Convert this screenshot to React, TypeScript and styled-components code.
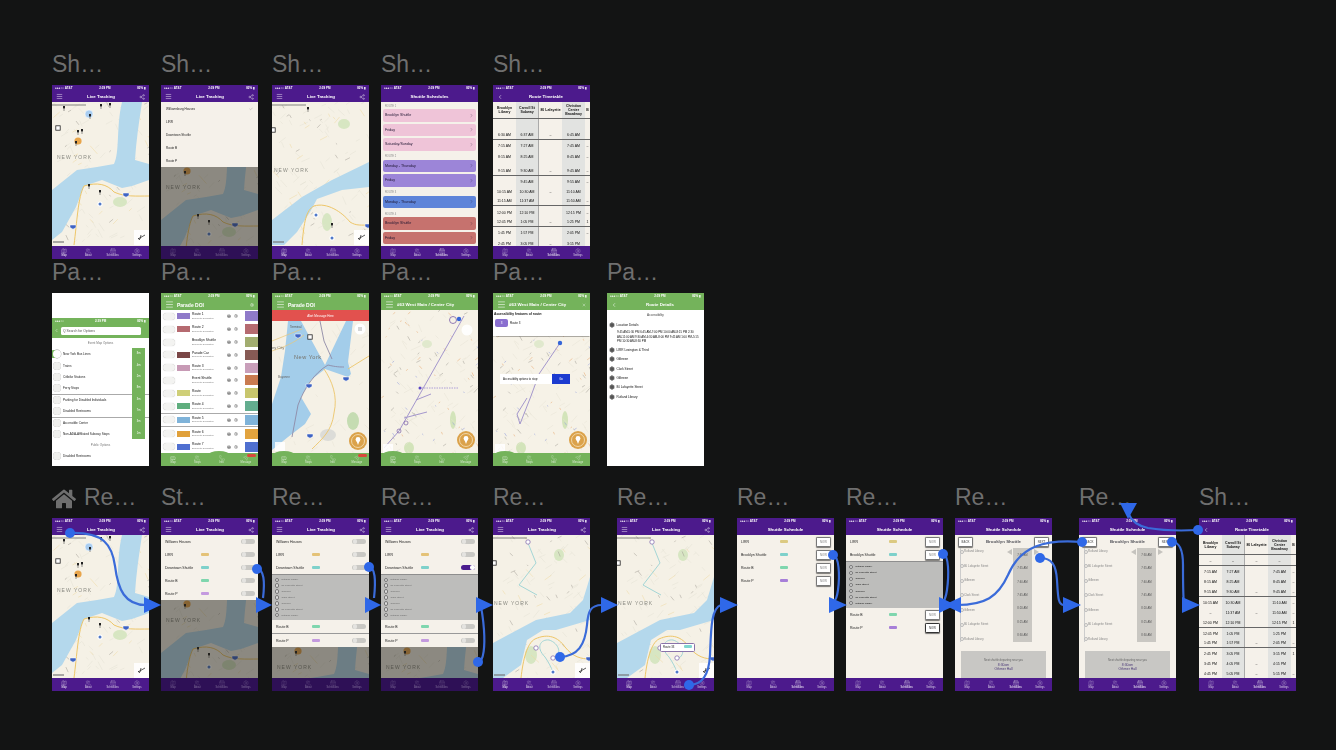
import React from "react";
import styled, { createGlobalStyle } from "styled-components";
import { Menu, Share2, Map as MapIcon, Users, CalendarDays, Settings, ChevronLeft, ChevronRight, Check, Bus, Phone, Send, X } from "lucide-react";
import { FaHome } from "react-icons/fa";

const PURPLE = "#4c1a8c";
const GREEN = "#74b35b";
const PAPER = "#f5f1ea";

const Global = createGlobalStyle`
  html, body { margin: 0; padding: 0; background: #131414; }
  body { font-family: "Liberation Sans", Arial, sans-serif; }
  #root { width: 1336px; height: 750px; overflow: hidden; }
`;

const Board = styled.div`
  position: relative;
  width: 1336px;
  height: 750px;
  padding: 50px 0 0 52px;
  box-sizing: border-box;
  background: #131414;
`;
const Row = styled.div<{ $top: number }>`
  display: flex;
  margin-top: ${(p) => p.$top}px;
`;
const Column = styled.div<{ $gap: number }>`
  width: 97px;
  margin-right: ${(p) => p.$gap}px;
  flex: none;
`;
const Label = styled.div`
  display: flex;
  align-items: baseline;
  gap: 8px;
  height: 35px;
  font-size: 23px;
  line-height: 29px;
  color: #6f6f6f;
  white-space: nowrap;
  svg { align-self: center; margin-top: -4px; flex: none; }
`;
const Frame = styled.div<{ $h: number; $bg?: string }>`
  width: 97px;
  height: ${(p) => p.$h}px;
  display: flex;
  flex-direction: column;
  overflow: hidden;
  background: ${(p) => p.$bg || PAPER};
  color: #1c1c1c;
  filter: blur(0.35px);
`;
const Bar = styled.div<{ $c: string }>`
  flex: none;
  background: ${(p) => p.$c};
  color: #fff;
`;
const Status = styled.div`
  height: 6px;
  display: flex;
  align-items: center;
  justify-content: space-between;
  padding: 0 3px;
  font-size: 3px;
  font-weight: bold;
`;
const Nav = styled.div`
  height: 11px;
  display: flex;
  align-items: center;
  padding: 0 4px;
  gap: 3px;
  font-size: 3.8px;
  svg { flex: none; }
`;
const Title = styled.div<{ $left?: boolean; $size?: number }>`
  flex: 1;
  text-align: ${(p) => (p.$left ? "left" : "center")};
  font-size: ${(p) => p.$size || 4.4}px;
  white-space: nowrap;
  font-weight: bold;
`;
const Content = styled.div`
  flex: 1;
  min-height: 0;
  display: flex;
  flex-direction: column;
  position: relative;
  overflow: hidden;
`;
const Tabs = styled.div<{ $c: string; $dim?: boolean }>`
  flex: none;
  height: 13px;
  display: grid;
  grid-template-columns: repeat(4, 1fr);
  background: ${(p) => p.$c};
  color: #fff;
  position: relative;
  & > * { opacity: ${(p) => (p.$dim ? 0.35 : 0.75)}; }
`;
const Tab = styled.div<{ $on?: boolean }>`
  display: flex;
  flex-direction: column;
  align-items: center;
  justify-content: center;
  gap: 0.5px;
  font-size: 2.6px;
  line-height: 3px;
  ${(p) => (p.$on ? "opacity: 1 !important;" : "")}
`;
const Bump = styled.i<{ $at: number }>`
  position: absolute;
  top: -2px;
  left: ${(p) => p.$at}px;
  width: 22px;
  height: 8px;
  border-radius: 50%;
  background: ${GREEN};
  opacity: 1 !important;
`;
const Badge = styled.i`
  position: absolute;
  top: 0.5px;
  right: 2px;
  width: 9px;
  height: 3px;
  border-radius: 2px;
  background: #d9483b;
  opacity: 1 !important;
`;

const MapBox = styled.div<{ $dim?: boolean }>`
  flex: 1;
  min-height: 0;
  overflow: hidden;
  position: relative;
  &::after {
    content: "";
    display: ${(p) => (p.$dim ? "block" : "none")};
    position: absolute;
    inset: 0;
    background: rgba(35, 33, 28, 0.5);
  }
`;
const MapSvg = styled.svg<{ $top?: number }>`
  display: block;
  width: 97px;
  margin-top: ${(p) => p.$top || 0}px;
`;

/* ---------- map art ---------- */
function rng(seed: number) {
  let s = seed;
  return () => {
    s = (s * 16807) % 2147483647;
    return s / 2147483647;
  };
}
function scribble(seed: number, n: number, h: number, len: number) {
  const r = rng(seed * 7919);
  let d = "";
  for (let i = 0; i < n; i++) {
    const x = r() * 97;
    const y = r() * h;
    const a = -0.9 + (r() > 0.5 ? 1.6 : 0) + r() * 0.5;
    const l = len * (0.4 + r());
    d += `M${x.toFixed(1)} ${y.toFixed(1)}l${(Math.cos(a) * l).toFixed(1)} ${(Math.sin(a) * l).toFixed(1)}`;
  }
  return d;
}

type Pin = [number, number, "k" | "b" | "h" | "o" | "s" | "q" | "r"];
const Mark = ({ p }: { p: Pin }) => {
  const [x, y, t] = p;
  if (t === "k")
    return (
      <g>
        <rect x={x - 1} y={y - 2} width={2} height={2.4} fill="#222" />
        <path d={`M${x} ${y}v3`} stroke="#333" strokeWidth={0.5} />
      </g>
    );
  if (t === "b")
    return (
      <g>
        <circle cx={x} cy={y} r={2.6} fill="#fff" />
        <circle cx={x} cy={y} r={1.5} fill="#4f78c8" />
      </g>
    );
  if (t === "h") return <circle cx={x} cy={y} r={4} fill="#a9cdf0" stroke="#fff" strokeWidth={0.5} />;
  if (t === "o") return <circle cx={x} cy={y} r={3.6} fill="#e8a54b" />;
  if (t === "s") return <path d={`M${x - 3} ${y - 2}h6v2.6l-3 1.6l-3-1.6z`} fill="#3e63c4" stroke="#fff" strokeWidth={0.5} />;
  if (t === "q") return <rect x={x - 2.2} y={y - 2.2} width={4.4} height={4.4} fill="#fff" stroke="#222" strokeWidth={0.8} />;
  return <circle cx={x} cy={y} r={2.2} fill="#fff" stroke="#7a5ea8" strokeWidth={0.7} />;
};

const Corner = () => (
  <g>
    <path d="M0 3h34" stroke="#555" strokeWidth={0.7} />
    <rect x={82} y={128} width={15} height={15} fill="#fff" opacity={0.85} />
    <path d="M86 137l7-4M88 137l1-4M86 136l2 2" stroke="#333" strokeWidth={0.8} fill="none" />
    <path d="M1 140h11" stroke="#777" strokeWidth={1.2} />
  </g>
);

const maps = {
  a: {
    seed: 11,
    water: "M70 0L90 0C87 20 84 40 83 58L97 62L97 78L80 84L70 86L50 78L32 84L24 105L10 130L0 138L0 88L25 68L45 65L62 62C68 50 64 25 70 0Z",
    road: "M22 143C25 120 26 95 32 84C45 80 55 82 62 90C72 95 85 94 97 94",
    parks: [[68, 100, 7, 5]],
    pins: [[12, 6, "k"], [37, 12, "h"], [49, 4, "k"], [58, 3, "k"], [38, 14, "k"], [26, 30, "k"], [30, 29, "k"], [26, 39, "o"], [24, 41, "k"], [37, 84, "k"], [48, 90, "k"], [48, 102, "b"], [74, 93, "s"], [21, 125, "s"], [6, 26, "q"]] as Pin[],
    text: [[5, 57, "NEW YORK"]],
  },
  b: {
    seed: 29,
    water: "M97 60L97 85L70 88L45 97L38 110L25 130L12 143L0 143L0 118L30 95L60 78Z",
    road: "M30 143C32 120 34 108 42 104C55 100 70 110 78 120C84 124 90 123 97 123",
    parks: [[72, 22, 6, 5], [55, 120, 5, 9]],
    pins: [[36, 7, "k"], [1, 28, "q"], [44, 113, "b"], [60, 123, "k"], [60, 136, "b"], [96, 124, "s"]] as Pin[],
    text: [[2, 70, "NEW YORK"]],
  },
  c: {
    seed: 47,
    water: "M97 42L90 65L77 78L43 85L0 108L0 143L10 143L28 130L34 105L50 95L63 95L97 85Z",
    road: "M28 143C30 125 34 108 42 104C55 98 65 102 72 112C80 122 88 124 97 124",
    parks: [[66, 20, 5, 6], [38, 120, 6, 9]],
    pins: [[35, 7, "r"], [1, 28, "q"], [43, 113, "r"], [60, 123, "r"], [60, 137, "b"], [96, 124, "s"]] as Pin[],
    route: "M35 8L43 28L26 50L44 60M60 124C70 120 66 108 56 105C48 104 42 112 52 122C56 128 58 132 60 137",
    text: [[1, 70, "NEW YORK"]],
  },
};

const MapArt = ({ v, top, h = 143 }: { v: keyof typeof maps; top?: number; h?: number }) => {
  const m = maps[v] as any;
  return (
    <MapSvg $top={top} height={h} viewBox={`0 0 97 ${h}`}>
      <rect width={97} height={h} fill="#f5f1e6" />
      {m.parks.map((g: number[], i: number) => (
        <ellipse key={i} cx={g[0]} cy={g[1]} rx={g[2]} ry={g[3]} fill="#d7e6c2" />
      ))}
      <path d={scribble(m.seed, 80, h, 7)} stroke="#e3dfd2" strokeWidth={0.45} fill="none" />
      <path d={scribble(m.seed + 3, 18, h, 8)} stroke="#efd9a0" strokeWidth={0.5} fill="none" />
      <path d={scribble(m.seed + 5, 24, h, 4)} stroke="#8a877e" strokeWidth={0.4} fill="none" />
      <path d={m.water} fill="#b4d8ec" />
      <path d={m.road} stroke="#eec668" strokeWidth={1} fill="none" />
      {m.route && <path d={m.route} stroke="#a4d6d6" strokeWidth={1} fill="none" />}
      {m.text.map((t: any, i: number) => (
        <text key={i} x={t[0]} y={t[1]} fontSize={5} letterSpacing={1} fill="#8b8b83" fontFamily="Liberation Sans">
          {t[2]}
        </text>
      ))}
      {m.pins.map((p: Pin, i: number) => (
        <Mark key={i} p={p} />
      ))}
      <Corner />
    </MapSvg>
  );
};

const PinButton = ({ x, y }: { x: number; y: number }) => (
  <g>
    <circle cx={x} cy={y} r={9} fill="#dba24a" />
    <circle cx={x} cy={y} r={6.5} fill="none" stroke="#f5e2bd" strokeWidth={0.8} />
    <circle cx={x} cy={y - 1.5} r={2.4} fill="#fff" />
    <path d={`M${x - 1.5} ${y}l1.5 4l1.5-4z`} fill="#fff" />
  </g>
);

const CityMap = () => (
  <MapSvg height={132} viewBox="0 0 97 132">
    <rect width={97} height={132} fill="#f5f1e6" />
    <ellipse cx={81} cy={100} rx={6} ry={9} fill="#c5dcb2" />
    <ellipse cx={56} cy={114} rx={8} ry={6} fill="#dcdcd8" />
    <path d={scribble(71, 50, 132, 7)} stroke="#e2ddd0" strokeWidth={0.4} fill="none" />
    <path
      d="M16 0L29 0L53 44L74 0L81 0L76 41L79 53L76 56L53 48L39 59L29 76L39 93L33 103L16 116L0 129L0 83L9 56L13 30Z"
      fill="#a3cdea"
    />
    <path d="M0 30C12 26 22 22 32 14M0 20L30 8" stroke="#e9c777" strokeWidth={0.7} fill="none" />
    <path d="M52 48C60 60 66 75 62 92C60 110 50 118 40 128M76 48L97 35" stroke="#ecc56a" strokeWidth={0.9} fill="none" />
    <path d="M20 116L26 84C32 68 42 52 56 44C64 46 68 46 72 46M48 0L52 20L60 38" stroke="#8f8aa6" strokeWidth={0.9} fill="none" />
    <text x={22} y={38} fontSize={5.6} letterSpacing={0.5} fill="#76736b" fontFamily="Liberation Sans">New York</text>
    <text x={0} y={28} fontSize={4} fill="#77746b" fontFamily="Liberation Sans">ey City</text>
    <text x={6} y={57} fontSize={3} fill="#666" fontFamily="Liberation Sans">Bayonne</text>
    <text x={18} y={7} fontSize={3} fill="#555" fontFamily="Liberation Sans">Terminal</text>
    <Mark p={[26, 15, "s"]} />
    <Mark p={[38, 16, "q"]} />
    <Mark p={[74, 58, "s"]} />
    <Mark p={[37, 65, "s"]} />
    <Mark p={[38, 115, "s"]} />
    <circle cx={88} cy={8} r={5.5} fill="#fff" />
    <path d="M86 7h4M86 9h4" stroke="#555" strokeWidth={0.5} />
    <rect x={3} y={121} width={10} height={9} fill="#fff" opacity={0.85} />
    <PinButton x={86} y={120} />
  </MapSvg>
);

const StreetMap = ({ h = 144, alt }: { h?: number; alt?: boolean }) => (
  <MapSvg height={h} viewBox={`0 0 97 ${h}`}>
    <rect width={97} height={h} fill="#f6f2e7" />
    <ellipse cx={28} cy={138} rx={5} ry={6} fill="#d3e4ba" />
    <ellipse cx={72} cy={110} rx={3} ry={9} fill="#d3e4ba" />
    <ellipse cx={46} cy={34} rx={5} ry={4} fill="#e0e9cd" />
    <path d={scribble(83, 90, h, 8)} stroke="#e7e2d4" strokeWidth={0.5} fill="none" />
    <path d={scribble(91, 34, h, 4)} stroke="#85847c" strokeWidth={0.4} fill="none" />
    <path d={scribble(101, 30, h, 3)} stroke="#eab07c" strokeWidth={0.6} fill="none" />
    <path d={scribble(131, 18, h, 3)} stroke="#9aa4dc" strokeWidth={0.6} fill="none" />
    {alt ? (
      <g>
        <path d="M67 33L46 64L38 86L27 114L24 104L34 88" stroke="#a497cd" strokeWidth={1} fill="none" />
        <circle cx={67} cy={33} r={2.2} fill="#3565d8" />
      </g>
    ) : (
      <g>
        <path d="M83 6L18 121L3 138M23 108L46 102M35 90L50 84" stroke="#a497cd" strokeWidth={1} fill="none" />
        <path d="M38 78H78" stroke="#9c88d6" strokeWidth={0.8} strokeDasharray="1.5 1" />
        <circle cx={39} cy={78} r={1.5} fill="#5a45c4" />
        <circle cx={72} cy={10} r={3.5} fill="none" stroke="#7a5ea8" strokeWidth={0.8} />
        <circle cx={78} cy={9} r={2.2} fill="#3565d8" />
        <circle cx={86} cy={20} r={5.5} fill="#fff" opacity={0.9} />
        <circle cx={25} cy={113} r={2} fill="none" stroke="#7a5ea8" strokeWidth={0.7} />
        <circle cx={18} cy={121} r={2} fill="none" stroke="#7a5ea8" strokeWidth={0.7} />
      </g>
    )}
    <rect x={2} y={134} width={10} height={10} fill="#fff" opacity={0.85} />
    <PinButton x={85} y={130} />
  </MapSvg>
);

/* ---------- shared chrome ---------- */
const Head = ({ c = PURPLE, title, left, right, size, back, plain }: any) => (
  <Bar $c={c}>
    <Status>
      <span>●●●○○ AT&amp;T</span>
      <span>2:39 PM</span>
      <span>82% ▮</span>
    </Status>
    <Nav>
      {back ? <ChevronLeft size={6} /> : plain ? null : <Menu size={left ? 9 : 7} strokeWidth={1.5} />}
      <Title $left={left} $size={size}>{title}</Title>
      {right}
    </Nav>
  </Bar>
);
const ShareBtn = <Share2 size={6} strokeWidth={1.2} />;

const PurpleTabs = ({ dim, active = 0, third = "Schedules" }: { dim?: boolean; active?: number; third?: string }) => {
  const items: [any, string][] = [[MapIcon, "Map"], [Users, "About"], [CalendarDays, third], [Settings, "Settings"]];
  return (
    <Tabs $c={dim ? "#2e1056" : PURPLE} $dim={dim}>
      {items.map(([I, t], i) => (
        <Tab key={i} $on={i === active && !dim}>
          <I size={6} strokeWidth={1} />
          <span>{t}</span>
        </Tab>
      ))}
    </Tabs>
  );
};
const GreenTabs = ({ bump, badge = true }: { bump: number; badge?: boolean }) => {
  const items: [any, string][] = [[Bus, "Map"], [Users, "Stops"], [Phone, "Info"], [Send, "Message"]];
  return (
    <Tabs $c={GREEN}>
      <Bump $at={bump} />
      {items.map(([I, t], i) => (
        <Tab key={i}>
          <I size={6} strokeWidth={1} />
          <span>{t}</span>
        </Tab>
      ))}
      {badge && <Badge />}
    </Tabs>
  );
};

/* ---------- live tracking ---------- */
const Popup = styled.div`
  position: absolute;
  left: 43px;
  top: 108px;
  width: 35px;
  height: 9px;
  box-sizing: border-box;
  background: #fff;
  border: 0.8px solid #8a73aa;
  border-radius: 1.5px;
  padding: 1px 2px;
  display: flex;
  justify-content: space-between;
  font-size: 2.8px;
`;
const Chip = styled.i<{ $c: string }>`
  display: block;
  width: 8px;
  height: 3.4px;
  border-radius: 1px;
  background: ${(p) => p.$c};
`;
const MapScreen = ({ v, h = 174, popup, tab = 0 }: { v: keyof typeof maps; h?: number; popup?: boolean; tab?: number }) => (
  <Frame $h={h}>
    <Head title="Live Tracking" right={ShareBtn} />
    <Content>
      <MapBox>
        <MapArt v={v} h={h - 30} />
      </MapBox>
      {popup && (
        <Popup>
          <span>Route 33</span>
          <Chip $c="#7fd6d0" />
        </Popup>
      )}
    </Content>
    <PurpleTabs active={tab} />
  </Frame>
);
const Panel = styled.div`
  flex: none;
  background: ${PAPER};
`;
const ListRow = styled.div<{ $line?: boolean }>`
  height: 13px;
  display: grid;
  grid-template-columns: 36px 10px 1fr;
  align-items: center;
  padding: 0 3px 0 4px;
  font-size: 3.5px;
  white-space: nowrap;
  ${(p) => (p.$line ? "border-top: 0.6px solid #999;" : "")}
  & > :last-child { justify-self: end; }
`;
const Toggle = styled.i<{ $on?: boolean }>`
  display: flex;
  align-items: center;
  justify-content: ${(p) => (p.$on ? "flex-end" : "flex-start")};
  width: 14px;
  height: 5.6px;
  padding: 0.5px;
  box-sizing: border-box;
  border-radius: 3px;
  background: ${(p) => (p.$on ? "#4b1d8e" : "#c9c8c4")};
  &::after {
    content: "";
    width: 4.6px;
    height: 4.6px;
    border-radius: 50%;
    background: ${(p) => (p.$on ? "#fff" : "#e4e3e0")};
  }
`;
const Drawer = styled.div<{ $h: number; $bright?: boolean }>`
  height: ${(p) => p.$h}px;
  background: #bdbdbb;
  border-top: 0.8px solid #8e8e8e;
  box-sizing: border-box;
  padding: 2.5px 3px;
  display: flex;
  flex-direction: column;
  justify-content: space-between;
  font-size: 2.5px;
  color: ${(p) => (p.$bright ? "#111" : "#6b6b6b")};
`;
const DrawerItem = styled.div`
  display: flex;
  align-items: center;
  gap: 2px;
  &::before {
    content: "";
    width: 2.4px;
    height: 2.4px;
    border-radius: 50%;
    border: 0.3px solid #777;
    background: #ddd;
  }
`;
const stops = ["Rutland Library", "80 Lafayette Street", "Gilbreen", "Clark Street", "Gilbreen", "80 Lafayette Street", "Rutland Library"];
const StopDrawer = ({ h = 46, bright }: { h?: number; bright?: boolean }) => (
  <Drawer $h={h} $bright={bright}>
    {stops.map((s, i) => (
      <DrawerItem key={i}>{s}</DrawerItem>
    ))}
  </Drawer>
);

const LiveList = ({ h = 174, open, on }: { h?: number; open?: boolean; on?: boolean }) => (
  <Frame $h={h}>
    <Head title="Live Tracking" right={ShareBtn} />
    <Content>
      <Panel>
        <ListRow>Williams Houses<span /><Toggle /></ListRow>
        <ListRow>LIRR<Chip $c="#e4c277" /><Toggle /></ListRow>
        <ListRow>Downtown Shuttle<Chip $c="#7ed1cb" /><Toggle $on={on} /></ListRow>
        {open && <StopDrawer />}
        <ListRow>Route B<Chip $c="#7fd6ae" /><Toggle /></ListRow>
        <ListRow $line={open}>Route P<Chip $c="#c49adf" /><Toggle /></ListRow>
      </Panel>
      <MapBox $dim>
        <MapArt v="a" top={-35} h={143} />
      </MapBox>
    </Content>
    <PurpleTabs dim />
  </Frame>
);
const PlainRow = styled.div`
  height: 13px;
  display: flex;
  align-items: center;
  justify-content: space-between;
  padding: 0 5px;
  font-size: 3.1px;
`;
const OptionList = ({ h = 174 }: { h?: number }) => (
  <Frame $h={h}>
    <Head title="Live Tracking" right={ShareBtn} />
    <Content>
      <Panel>
        {["Williamsburg Houses", "LIRR", "Downtown Shuttle", "Route B", "Route P"].map((t, i) => (
          <PlainRow key={t}>
            {t}
            {i === 0 && <Check size={4} strokeWidth={1} />}
          </PlainRow>
        ))}
      </Panel>
      <MapBox $dim>
        <MapArt v="a" top={-35} />
      </MapBox>
    </Content>
    <PurpleTabs dim />
  </Frame>
);

/* ---------- shuttle schedule list ---------- */
const Now = styled.span<{ $dark?: boolean }>`
  display: flex;
  align-items: center;
  justify-content: center;
  width: 13px;
  height: 8px;
  background: #fff;
  border: 0.7px solid ${(p) => (p.$dark ? "#333" : "#777")};
  border-radius: 1.2px;
  box-shadow: 0 0.6px 1px rgba(0, 0, 0, 0.5);
  font-size: 2.8px;
  color: ${(p) => (p.$dark ? "#222" : "#777")};
`;
const SchedRow = styled(ListRow)`
  grid-template-columns: 39px 10px 1fr;
`;
const SchedScreen = ({ open }: { open?: boolean }) => (
  <Frame $h={173}>
    <Head title="Shuttle Schedule" plain />
    <Content>
      <SchedRow>LIRR<Chip $c="#dcca82" /><Now>NOW</Now></SchedRow>
      <SchedRow>Brooklyn Shuttle<Chip $c="#7ed1cb" /><Now>NOW</Now></SchedRow>
      {open && <StopDrawer h={47} bright />}
      <SchedRow>Route B<Chip $c="#7fd6ae" /><Now>NOW</Now></SchedRow>
      <SchedRow>Route P<Chip $c="#a77fd8" /><Now $dark={open}>NOW</Now></SchedRow>
    </Content>
    <PurpleTabs active={2} />
  </Frame>
);

/* ---------- brooklyn shuttle ---------- */
const ShuttleTop = styled.div`
  height: 13px;
  display: flex;
  align-items: center;
  justify-content: space-between;
  padding: 0 3px;
  font-size: 4.4px;
  font-weight: bold;
  color: #55555c;
  flex: none;
`;
const TimeArea = styled.div`
  flex: none;
  height: 94px;
  display: grid;
  grid-template-columns: 1fr 19px 20px;
  padding: 0 0 0 5px;
`;
const Stops = styled.div`
  display: flex;
  flex-direction: column;
  justify-content: space-between;
  padding: 1px 0;
  font-size: 2.9px;
  color: #888;
  border-left: 0.6px solid #ccc;
  margin-right: 6px;
  position: relative;
`;
const Stop = styled.span`
  padding-left: 3px;
  white-space: nowrap;
  position: relative;
  &::before {
    content: "";
    position: absolute;
    left: -1.4px;
    top: 0.5px;
    width: 2px;
    height: 2px;
    border-radius: 50%;
    border: 0.3px solid #bbb;
    background: ${PAPER};
  }
`;
const Times = styled.div`
  background: #c9c7c2;
  display: flex;
  flex-direction: column;
  justify-content: space-around;
  align-items: center;
  font-size: 2.8px;
  color: #555;
  position: relative;
`;
const Arrow = styled.i<{ $dir: "l" | "r" }>`
  position: absolute;
  top: 1px;
  ${(p) => (p.$dir === "l" ? "left: -6.5px;" : "right: -6.5px;")}
  width: 0;
  height: 0;
  border-top: 3px solid transparent;
  border-bottom: 3px solid transparent;
  ${(p) => (p.$dir === "l" ? "border-right: 5px solid #c5c3be;" : "border-left: 5px solid #c5c3be;")}
`;
const NextBox = styled.div`
  margin: 9px 6px 0;
  height: 27px;
  flex: none;
  background: #c8c7c4;
  display: flex;
  flex-direction: column;
  align-items: center;
  justify-content: center;
  gap: 1px;
  font-size: 2.8px;
  color: #666;
  strong { font-size: 3.4px; font-weight: normal; color: #4c3a78; line-height: 4px; text-align: center; }
`;
const Brooklyn = ({ times }: { times: string[] }) => (
  <Frame $h={173}>
    <Head title="Shuttle Schedule" plain />
    <Content>
      <ShuttleTop>
        <Now>BACK</Now>
        Brooklyn Shuttle
        <Now>NEXT</Now>
      </ShuttleTop>
      <TimeArea>
        <Stops>
          {stops.map((s, i) => (
            <Stop key={i}>{s}</Stop>
          ))}
        </Stops>
        <Times>
          <Arrow $dir="l" />
          <Arrow $dir="r" />
          {times.map((t, i) => (
            <span key={i}>{t}</span>
          ))}
        </Times>
        <span />
      </TimeArea>
      <NextBox>
        Next shuttle departing near you
        <strong>8:30am<br />Othmer Hall</strong>
      </NextBox>
    </Content>
    <PurpleTabs active={2} />
  </Frame>
);
const times = ["7:30 AM", "7:35 AM", "7:40 AM", "7:45 AM", "8:20 AM", "8:25 AM", "8:30 AM"];

/* ---------- grouped schedule ---------- */
const Section = styled.div`
  font-size: 2.6px;
  color: #888;
  padding: 2.5px 4px 1.5px;
  line-height: 3px;
`;
const ColorBar = styled.div<{ $c: string }>`
  height: 13px;
  margin: 0 2px 1.6px;
  border-radius: 2px;
  background: ${(p) => p.$c};
  display: flex;
  align-items: center;
  justify-content: space-between;
  padding: 0 2px;
  font-size: 3.6px;
  color: #1d1530;
`;
const Grouped = () => {
  const groups: [string, string, string[]][] = [
    ["ROUTE 1", "#efc4d8", ["Brooklyn Shuttle", "Friday", "Saturday/Sunday"]],
    ["ROUTE 2", "#9c85d8", ["Monday - Thursday", "Friday"]],
    ["ROUTE 3", "#5e84d9", ["Monday - Thursday"]],
    ["ROUTE 4", "#c6726e", ["Brooklyn Shuttle", "Friday"]],
  ];
  return (
    <Frame $h={174}>
      <Head title="Shuttle Schedules" plain />
      <Content>
        {groups.map(([g, c, items]) => (
          <React.Fragment key={g}>
            <Section>{g}</Section>
            {items.map((t, i) => (
              <ColorBar key={i} $c={c}>
                {t}
                <ChevronRight size={5} strokeWidth={1.2} />
              </ColorBar>
            ))}
          </React.Fragment>
        ))}
      </Content>
      <PurpleTabs active={2} />
    </Frame>
  );
};

/* ---------- timetable ---------- */
const TableGrid = styled.div`
  flex: 1;
  overflow: hidden;
  background: ${PAPER};
`;
const TRow = styled.div<{ $h: number; $sep?: boolean }>`
  display: grid;
  grid-template-columns: 23px 23px 23px 23px 5px;
  height: ${(p) => p.$h}px;
  box-sizing: border-box;
  align-items: end;
  text-align: center;
  font-size: 3.5px;
  line-height: 4px;
  color: #111;
  border-bottom: ${(p) => (p.$sep ? "0.8px solid #666" : "0")};
`;
const TCell = styled.div<{ $gray?: boolean; $head?: boolean; $rule?: boolean }>`
  height: 100%;
  display: flex;
  align-items: ${(p) => (p.$head ? "center" : "flex-end")};
  justify-content: center;
  padding-bottom: ${(p) => (p.$head ? 0 : 2)}px;
  box-sizing: border-box;
  background: ${(p) => (p.$gray ? "#e2e3e1" : "transparent")};
  font-weight: ${(p) => (p.$head ? "bold" : "normal")};
  ${(p) => (p.$rule ? "border-right: 1px solid #aaa;" : "")}
`;
type TableRow = [number, boolean, string[]];
const TableScreen = ({ h, head, data, headH, nav }: { h: number; head: string[]; data: TableRow[]; headH: number; nav: string }) => (
  <Frame $h={h}>
    <Head title={nav} back />
    <Content>
      <TableGrid>
        <TRow $h={headH} $sep>
          {head.map((t, i) => (
            <TCell key={i} $head $gray={i === 1 || i === 3} $rule={i === 1}>{t}</TCell>
          ))}
        </TRow>
        {data.map(([rh, sep, cells], r) => (
          <TRow key={r} $h={rh} $sep={sep}>
            {cells.map((t, i) => (
              <TCell key={i} $gray={i === 1 || i === 3} $rule={i === 1}>{t}</TCell>
            ))}
          </TRow>
        ))}
      </TableGrid>
    </Content>
    <PurpleTabs active={2} />
  </Frame>
);
const tableHead = ["Brooklyn Library", "Carroll St Subway", "80 Lafayette", "Christian Center Broadway", "B"];
const table1: TableRow[] = [
  [21, true, ["6:30 AM", "6:37 AM", "–", "6:45 AM", ""]],
  [10.3, false, ["7:15 AM", "7:27 AM", "", "7:45 AM", "–"]],
  [10.3, false, ["8:15 AM", "8:25 AM", "", "8:45 AM", "–"]],
  [15, true, ["9:15 AM", "9:30 AM", "–", "9:45 AM", "–"]],
  [10.3, false, ["", "9:45 AM", "", "9:55 AM", "–"]],
  [10.3, false, ["10:15 AM", "10:30 AM", "–", "11:10 AM", ""]],
  [10.3, true, ["11:15 AM", "11:37 AM", "", "11:50 AM", "–"]],
  [10.3, false, ["12:00 PM", "12:10 PM", "", "12:15 PM", "–"]],
  [10.3, true, ["12:45 PM", "1:05 PM", "–", "1:25 PM", "1"]],
  [10.3, false, ["1:45 PM", "1:57 PM", "", "2:05 PM", "–"]],
  [10.3, false, ["2:45 PM", "3:05 PM", "–", "3:15 PM", ""]],
];
const table3: TableRow[] = [
  [11, true, ["–", "–", "–", "–", ""]],
  [10, false, ["7:15 AM", "7:27 AM", "", "7:45 AM", "–"]],
  [10, false, ["8:15 AM", "8:25 AM", "", "8:45 AM", "–"]],
  [11, true, ["9:15 AM", "9:30 AM", "–", "9:45 AM", "–"]],
  [10, false, ["10:15 AM", "10:30 AM", "", "11:10 AM", "–"]],
  [10, false, ["–", "11:37 AM", "–", "11:50 AM", "–"]],
  [11, true, ["12:00 PM", "12:10 PM", "", "12:15 PM", "1"]],
  [10, false, ["12:45 PM", "1:05 PM", "", "1:25 PM", ""]],
  [10, true, ["1:45 PM", "1:57 PM", "–", "2:05 PM", "–"]],
  [10, false, ["2:45 PM", "3:05 PM", "", "3:15 PM", "1"]],
  [10, false, ["3:45 PM", "4:05 PM", "–", "4:15 PM", ""]],
  [10, false, ["4:45 PM", "5:05 PM", "–", "5:15 PM", "–"]],
];

/* ---------- parade screens ---------- */
const SearchHead = styled.div`
  flex: none;
  margin-top: 25px;
  height: 20px;
  background: ${GREEN};
  color: #fff;
`;
const SearchRow = styled.div`
  display: flex;
  align-items: center;
  gap: 2px;
  padding: 0 8px 0 2px;
  height: 13px;
`;
const SearchField = styled.div`
  flex: 1;
  height: 8px;
  background: #fff;
  color: #555;
  border-radius: 1.5px;
  display: flex;
  align-items: center;
  padding: 0 2px;
  font-size: 3.4px;
  gap: 1px;
`;
const OptionWrap = styled.div`
  position: relative;
  flex: 1;
  background: #fff;
`;
const OptionHead = styled.div`
  height: 10.5px;
  line-height: 10.5px;
  text-align: center;
  font-size: 3px;
  color: #777;
`;
const OptionRow = styled.div<{ $line?: boolean }>`
  display: flex;
  align-items: center;
  gap: 2px;
  height: 11.4px;
  box-sizing: border-box;
  font-size: 3.1px;
  white-space: nowrap;
  ${(p) => (p.$line ? "border-top: 0.6px solid #aaa;" : "")}
`;
const SmallToggle = styled.i<{ $on?: boolean }>`
  flex: none;
  width: 8px;
  height: 8px;
  margin-left: 1px;
  border-radius: 50%;
  background: ${(p) => (p.$on ? "#fff" : "#f0f0ee")};
  box-shadow: ${(p) => (p.$on ? `-3px 0 0 ${GREEN}, 0 0 0 0.4px #999` : "0 0 0.6px #999")};
`;
const SideIndex = styled.div`
  position: absolute;
  right: 4px;
  top: 10px;
  width: 13px;
  height: 91px;
  background: ${GREEN};
  display: flex;
  flex-direction: column;
  justify-content: space-around;
  align-items: center;
  font-size: 2.6px;
  color: #fff;
`;
const SearchScreen = () => {
  const items = ["New York Bus Lines", "Trains", "Citibike Stations", "Ferry Stops", "Parking for Disabled Individuals", "Disabled Restrooms", "Accessible Center", "Non-ADA-Affiliated Subway Stops"];
  return (
    <Frame $h={173} $bg="#fff">
      <SearchHead>
        <Status>
          <span>●●●○○</span>
          <span>2:39 PM</span>
          <span>82% ▮</span>
        </Status>
        <SearchRow>
          <ChevronLeft size={5} />
          <SearchField>Q Search for Options</SearchField>
        </SearchRow>
      </SearchHead>
      <OptionWrap>
        <OptionHead>Event Map Options</OptionHead>
        {items.map((t, i) => (
          <OptionRow key={i} $line={i === 4 || i === 6}>
            <SmallToggle $on={i === 0} />
            {t}
          </OptionRow>
        ))}
        <OptionHead>Public Options</OptionHead>
        <OptionRow><SmallToggle />Disabled Restrooms</OptionRow>
        <SideIndex>
          {["8m", "4m", "2m", "8m", "3m", "7m", "3m", "1m"].map((t, i) => (
            <span key={i}>{t}</span>
          ))}
        </SideIndex>
      </OptionWrap>
    </Frame>
  );
};

const RouteRow = styled.div<{ $line?: boolean }>`
  flex: 1;
  min-height: 0;
  display: grid;
  grid-template-columns: 16px 14px 1fr 18px 13px;
  align-items: center;
  box-sizing: border-box;
  ${(p) => (p.$line ? "border-top: 0.6px solid #aaa;" : "")}
`;
const RouteToggle = styled.i`
  display: block;
  width: 12px;
  height: 7px;
  margin-left: 2px;
  border-radius: 4px;
  background: #f3f3f1;
  box-shadow: 0 0 0.8px #aaa;
`;
const RouteBox = styled.i<{ $c: string }>`
  display: block;
  width: 13px;
  height: 6px;
  background: ${(p) => p.$c};
`;
const RouteText = styled.div`
  padding-left: 1px;
  font-size: 3.3px;
  line-height: 3.6px;
  color: #111;
  white-space: nowrap;
  small { display: block; font-size: 2.2px; line-height: 2.6px; color: #777; }
`;
const RouteIcons = styled.div`
  display: flex;
  gap: 3px;
  color: #555;
`;
const RouteSwatch = styled.i<{ $c: string }>`
  display: block;
  height: 10px;
  background: ${(p) => p.$c};
`;
const routes: [string, string, string][] = [
  ["#8f7ac9", "Route 1", "#8f7ac9"],
  ["#b56a70", "Route 2", "#b56a70"],
  ["transparent", "Brooklyn Shuttle", "#a2ad70"],
  ["#7a4646", "Parade Car", "#875a55"],
  ["#c79ab5", "Route 3", "#c99fba"],
  ["transparent", "Event Shuttle", "#c97b50"],
  ["#cfcf78", "Route", "#c8c66d"],
  ["#5fae7e", "Route 4", "#63ad8f"],
  ["#7fb3d9", "Route 5", "#7fb3d9"],
  ["#e0a03a", "Route 6", "#e2a33e"],
  ["#4f6fd0", "Route 7", "#4f6fd0"],
];
const RouteList = () => (
  <Frame $h={173} $bg="#fff">
    <Head c={GREEN} title="Parade DOI" left size={5} right={<Settings size={4} />} />
    <Content>
      {routes.map(([c, t, s], i) => (
        <RouteRow key={i} $line={i === 8 || i === 9}>
          <RouteToggle />
          <RouteBox $c={c} />
          <RouteText>
            {t}
            <small>Bus Route Description</small>
          </RouteText>
          <RouteIcons>
            <Bus size={4} />
            <Settings size={4} />
          </RouteIcons>
          <RouteSwatch $c={s} />
        </RouteRow>
      ))}
    </Content>
    <GreenTabs bump={47} />
  </Frame>
);

const RedBar = styled.div`
  flex: none;
  height: 11px;
  background: #e2514e;
  color: #fff;
  font-size: 3px;
  display: flex;
  align-items: center;
  justify-content: center;
`;
const CityScreen = () => (
  <Frame $h={173}>
    <Head c={GREEN} title="Parade DOI" left size={5} />
    <RedBar>Alert Message Here</RedBar>
    <Content>
      <MapBox>
        <CityMap />
      </MapBox>
    </Content>
    <GreenTabs bump={1} />
  </Frame>
);
const StreetScreen = () => (
  <Frame $h={173}>
    <Head c={GREEN} title="#63 West Main / Center City" left size={4.4} />
    <Content>
      <MapBox>
        <StreetMap />
      </MapBox>
    </Content>
    <GreenTabs bump={1} badge={false} />
  </Frame>
);
const PopupPanel = styled.div`
  position: absolute;
  left: 0;
  right: 0;
  top: 0;
  height: 26px;
  background: #fff;
  box-shadow: 0 0.5px 1px rgba(0, 0, 0, 0.3);
  padding: 1.5px 1px;
  box-sizing: border-box;
  font-size: 3.3px;
  color: #111;
  font-weight: bold;
`;
const PopupLine = styled.div`
  display: flex;
  align-items: center;
  gap: 2px;
  margin-top: 3px;
  font-weight: normal;
  font-size: 3px;
`;
const PurplePill = styled.span`
  display: flex;
  align-items: center;
  justify-content: center;
  width: 13px;
  height: 8px;
  margin-left: 1px;
  border-radius: 2px;
  background: #8a6fd0;
  color: #fff;
`;
const Callout = styled.div`
  position: absolute;
  left: 7px;
  top: 64px;
  width: 70px;
  height: 10px;
  background: #fff;
  display: flex;
  align-items: center;
  justify-content: space-between;
  font-size: 2.8px;
  padding-left: 3px;
  box-sizing: border-box;
  color: #111;
`;
const GoBtn = styled.span`
  width: 18px;
  height: 10px;
  background: #1c3bd0;
  color: #fff;
  display: flex;
  align-items: center;
  justify-content: center;
  font-size: 2.8px;
`;
const RoutePopup = () => (
  <Frame $h={173}>
    <Head c={GREEN} title="#63 West Main / Center City" left size={4.4} right={<X size={4} />} />
    <Content>
      <MapBox>
        <StreetMap alt />
      </MapBox>
      <PopupPanel>
        Accessibility features of route:
        <PopupLine>
          <PurplePill>3</PurplePill>
          Route 3
        </PopupLine>
      </PopupPanel>
      <Callout>
        Accessibility options to stop:
        <GoBtn>Go</GoBtn>
      </Callout>
    </Content>
    <GreenTabs bump={1} badge={false} />
  </Frame>
);
const DetailBody = styled.div`
  flex: 1;
  background: #fff;
  padding: 2px;
`;
const DetailTitle = styled.div`
  text-align: center;
  font-size: 3.1px;
  color: #444;
  margin: 1px 0 3px;
`;
const DetailItem = styled.div`
  display: flex;
  align-items: center;
  gap: 1.5px;
  height: 9.4px;
  font-size: 3.1px;
  color: #111;
`;
const DetailText = styled.div`
  font-size: 2.9px;
  line-height: 4.4px;
  color: #111;
  padding: 1px 3px 1.5px 8px;
`;
const Detail = () => (
  <Frame $h={173} $bg="#fff">
    <Head c={GREEN} title="Route Details" back />
    <DetailBody>
      <DetailTitle>Accessibility</DetailTitle>
      <DetailItem><Settings size={6} fill="#555" color="#555" />Location Details</DetailItem>
      <DetailText>
        9:45 AM-5:30 PM 6:45 AM-7:00 PM 10:00 AM-8:15 PM 2:30 AM-11:00 AM 9:30 AM-6:30 AM-8:00 PM 9:45 AM 1:00 PM-5:15 PM 10:30 AM-8:30 PM
      </DetailText>
      {["LIRR Lexington & Third", "Gilbreen", "Clark Street", "Gilbreen", "80 Lafayette Street", "Rutland Library"].map((t, i) => (
        <DetailItem key={i}><Settings size={6} fill="#555" color="#555" />{t}</DetailItem>
      ))}
    </DetailBody>
  </Frame>
);

/* ---------- connectors ---------- */
const Wires = styled.svg`
  position: absolute;
  left: 0;
  top: 0;
  pointer-events: none;
`;
const BLUE = "#2f68e8";
const wires = [
  "M70 533C104 532 112 545 115 566C118 590 125 605 146 605",
  "M257 569C264 569 265 582 263 598",
  "M369 567C375 567 376 580 374 598",
  "M478 662C484 662 485 645 484 630C483 617 482 610 480 603",
  "M560 657C578 656 585 645 587 625C588 612 590 605 602 605",
  "M689 685C702 685 709 675 710 655C711 630 711 608 721 605",
  "M833 555C839 556 840 575 838 590C837 597 836 600 832 604",
  "M943 554C949 555 949 575 947 590C946 597 945 600 942 604",
  "M1082 542C1045 539 1020 546 1008 575C998 597 985 605 957 605",
  "M1040 558C1052 558 1056 565 1057 580C1058 597 1058 605 1064 605",
  "M1172 542C1180 542 1183 550 1183 565C1183 585 1183 597 1184 603",
  "M1198 530C1180 531 1160 530 1148 528C1138 526 1131 520 1128 513",
];
const dots = [[70, 533], [257, 569], [369, 567], [478, 662], [560, 657], [689, 685], [833, 555], [943, 554], [1082, 542], [1040, 558], [1172, 542], [1198, 530]];
const arrows = [
  "144,597 161,605 144,613", "256,597 272,605 256,613", "365,597 381,605 365,613", "476,597 493,605 476,613",
  "601,597 618,605 601,613", "720,597 738,605 720,613", "829,597 847,605 829,613", "939,597 956,605 939,613",
  "961,597 944,605 961,613", "1063,597 1081,605 1063,613", "1182,597 1200,605 1182,613", "1120,503 1137,503 1128,519",
];
const Connectors = () => (
  <Wires width={1336} height={750} viewBox="0 0 1336 750">
    {wires.map((d, i) => (
      <path key={i} d={d} stroke="#3a6bd9" strokeWidth={2.2} fill="none" />
    ))}
    {arrows.map((p, i) => (
      <polygon key={i} points={p} fill={BLUE} />
    ))}
    {dots.map(([x, y], i) => (
      <circle key={i} cx={x} cy={y} r={5} fill={BLUE} />
    ))}
  </Wires>
);

/* ---------- board ---------- */
type Cell = { label: string; home?: boolean; gap: number; node: React.ReactNode };
const row1: Cell[] = [
  { label: "Sh…", gap: 12, node: <MapScreen v="a" /> },
  { label: "Sh…", gap: 14, node: <OptionList /> },
  { label: "Sh…", gap: 12, node: <MapScreen v="b" /> },
  { label: "Sh…", gap: 15, node: <Grouped /> },
  { label: "Sh…", gap: 0, node: <TableScreen h={174} head={tableHead} headH={17} data={table1} nav="Route Timetable" /> },
];
const row2: Cell[] = [
  { label: "Pa…", gap: 12, node: <SearchScreen /> },
  { label: "Pa…", gap: 14, node: <RouteList /> },
  { label: "Pa…", gap: 12, node: <CityScreen /> },
  { label: "Pa…", gap: 15, node: <StreetScreen /> },
  { label: "Pa…", gap: 17, node: <RoutePopup /> },
  { label: "Pa…", gap: 0, node: <Detail /> },
];
const row3: Cell[] = [
  { label: "Re…", home: true, gap: 12, node: <MapScreen v="a" h={173} /> },
  { label: "St…", gap: 14, node: <LiveList h={173} /> },
  { label: "Re…", gap: 12, node: <LiveList h={173} open /> },
  { label: "Re…", gap: 15, node: <LiveList h={173} open on /> },
  { label: "Re…", gap: 27, node: <MapScreen v="c" h={173} /> },
  { label: "Re…", gap: 23, node: <MapScreen v="c" h={173} popup /> },
  { label: "Re…", gap: 12, node: <SchedScreen /> },
  { label: "Re…", gap: 12, node: <SchedScreen open /> },
  { label: "Re…", gap: 27, node: <Brooklyn times={times} /> },
  { label: "Re…", gap: 23, node: <Brooklyn times={times} /> },
  { label: "Sh…", gap: 0, node: <TableScreen h={173} head={tableHead} headH={20} data={table3} nav="Route Timetable" /> },
];

const BoardRow = ({ cells, top }: { cells: Cell[]; top: number }) => (
  <Row $top={top}>
    {cells.map((c, i) => (
      <Column key={i} $gap={c.gap}>
        <Label>
          {c.home && <FaHome size={24} />}
          {c.label}
        </Label>
        {c.node}
      </Column>
    ))}
  </Row>
);

export default function App() {
  return (
    <Board>
      <Global />
      <BoardRow cells={row1} top={0} />
      <BoardRow cells={row2} top={-1} />
      <BoardRow cells={row3} top={17} />
      <Connectors />
    </Board>
  );
}
